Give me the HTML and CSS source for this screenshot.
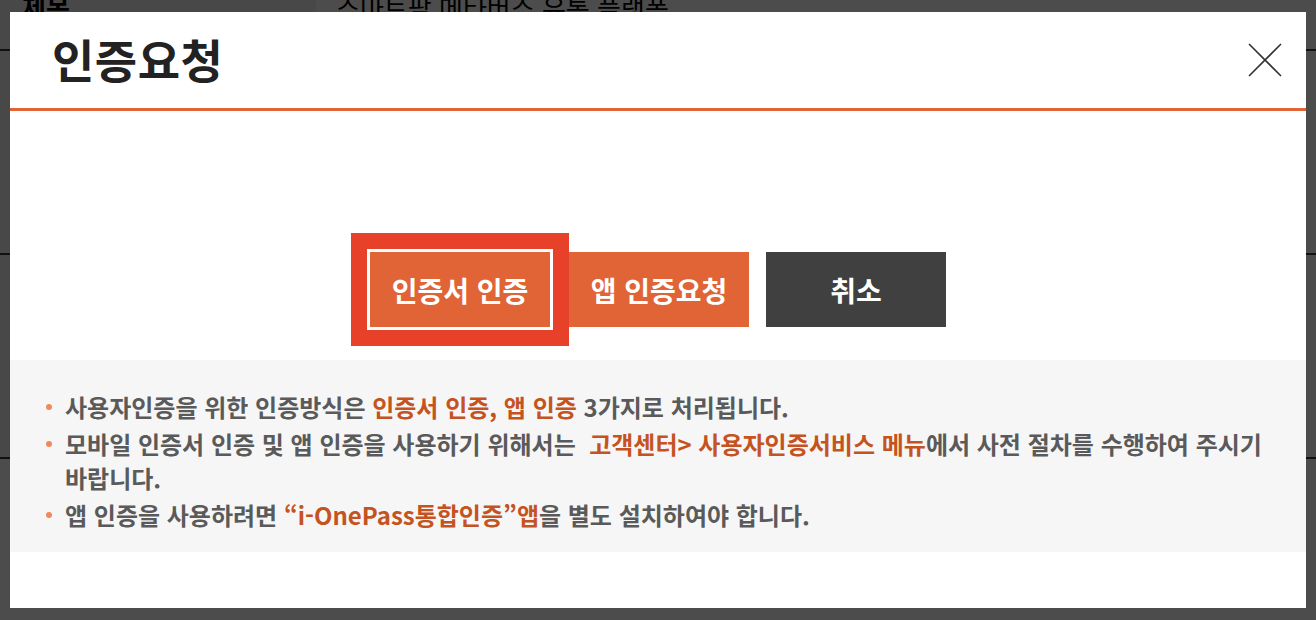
FILE: index.html
```html
<!DOCTYPE html>
<html lang="ko">
<head>
    <meta charset="UTF-8">
    <meta name="viewport" content="width=device-width, initial-scale=1.0">
    <title>인증요청</title>
    <link rel="stylesheet" href="styles.css">
</head>
<body>
    <div class="page">
        <table class="board">
            <tr><th>제목</th><td>스마트팜 메타버스 유통 플랫폼</td></tr>
            <tr><th>작성자</th><td>관리자</td></tr>
            <tr><th>내용</th><td>&nbsp;</td></tr>
        </table>
    </div>

    <div class="dim"></div>

    <div class="modal">
        <div class="modal-head">
            <h2>인증요청</h2>
            <button class="close-btn" aria-label="닫기">
                <svg width="34" height="34" viewBox="0 0 34 34">
                    <path d="M1 1 L33 33 M33 1 L1 33" stroke="#333" stroke-width="1.6" fill="none"/>
                </svg>
            </button>
        </div>

        <div class="modal-body">
            <div class="btn-row">
                <button class="btn btn-orange is-focus">인증서 인증</button>
                <button class="btn btn-orange">앱 인증요청</button>
                <button class="btn btn-dark">취소</button>
            </div>
        </div>

        <div class="notice">
            <ul>
                <li>사용자인증을 위한 인증방식은 <em>인증서 인증, 앱 인증</em> 3가지로 처리됩니다.</li>
                <li>모바일 인증서 인증 및 앱 인증을 사용하기 위해서는 &nbsp;<em>고객센터&gt; 사용자인증서비스 메뉴</em>에서 사전 절차를 수행하여 주시기 바랍니다.</li>
                <li>앱 인증을 사용하려면 <em>“i-OnePass통합인증”앱</em>을 별도 설치하여야 합니다.</li>
            </ul>
        </div>
    </div>
</body>
</html>
```

FILE: styles.css
```css
body {
    margin: 0;
    padding: 0;
    font-family: "Noto Sans CJK KR", "Noto Sans", sans-serif;
    background: #fff;
    overflow: hidden;
}

.page {
    width: 1316px;
    height: 620px;
}

.board {
    width: 100%;
    border-collapse: collapse;
    margin-top: -36px;
}

.board th,
.board td {
    height: 85px;
    border-bottom: 2px solid #3a3a3a;
    font-size: 26px;
    color: #000;
    text-align: left;
    padding: 0 22px;
}

.board th {
    width: 272px;
    background: #f2f2f2;
}

.board tr:nth-child(2) th,
.board tr:nth-child(2) td,
.board tr:nth-child(3) th,
.board tr:nth-child(3) td {
    height: 202px;
}

.board td {
    padding-left: 20px;
    font-weight: normal;
}

.dim {
    position: fixed;
    inset: 0;
    background: rgba(0, 0, 0, 0.7);
}

.modal {
    position: fixed;
    left: 10px;
    top: 12px;
    width: 1296px;
    height: 596px;
    background: #fff;
    display: flex;
    flex-direction: column;
}

.modal-head {
    height: 96px;
    border-bottom: 3px solid #e06436;
    display: flex;
    align-items: center;
    justify-content: space-between;
    padding: 0 24px 0 42px;
}

.modal-head h2 {
    margin: 0;
    font-size: 46px;
    font-weight: 700;
    color: #222;
    letter-spacing: 0.5px;
    position: relative;
    top: -2px;
}

.close-btn {
    background: none;
    border: none;
    padding: 0;
    width: 34px;
    height: 34px;
    cursor: pointer;
}

.close-btn svg {
    display: block;
}

.modal-body {
    height: 249px;
    display: flex;
    align-items: flex-end;
    justify-content: center;
}

.btn-row {
    display: flex;
    gap: 17px;
    padding-bottom: 33px;
}

.btn {
    width: 180px;
    height: 75px;
    border: none;
    font-family: inherit;
    font-size: 28px;
    font-weight: 700;
    color: #fff;
    cursor: pointer;
}

.btn-orange {
    background: #e06436;
}

.btn-dark {
    background: #404040;
}

.btn.is-focus {
    outline: 3px solid #fff;
    outline-offset: 0;
    box-shadow: 0 0 0 19px #e8412a;
    margin-right: 2px;
    position: relative;
}

.notice {
    background: #f6f6f6;
    padding: 30px 30px 20px 36px;
}

.notice ul {
    list-style: none;
    margin: 0;
    padding: 0;
}

.notice li {
    position: relative;
    padding-left: 19px;
    font-size: 24px;
    font-weight: 700;
    line-height: 34px;
    color: #5a5a5a;
}

.notice li + li {
    margin-top: 3px;
}

.notice li::before {
    content: "";
    position: absolute;
    left: 0;
    top: 14px;
    width: 6px;
    height: 6px;
    border-radius: 50%;
    background: #ef8a5c;
}

.notice em {
    font-style: normal;
    color: #c5531f;
}
```
